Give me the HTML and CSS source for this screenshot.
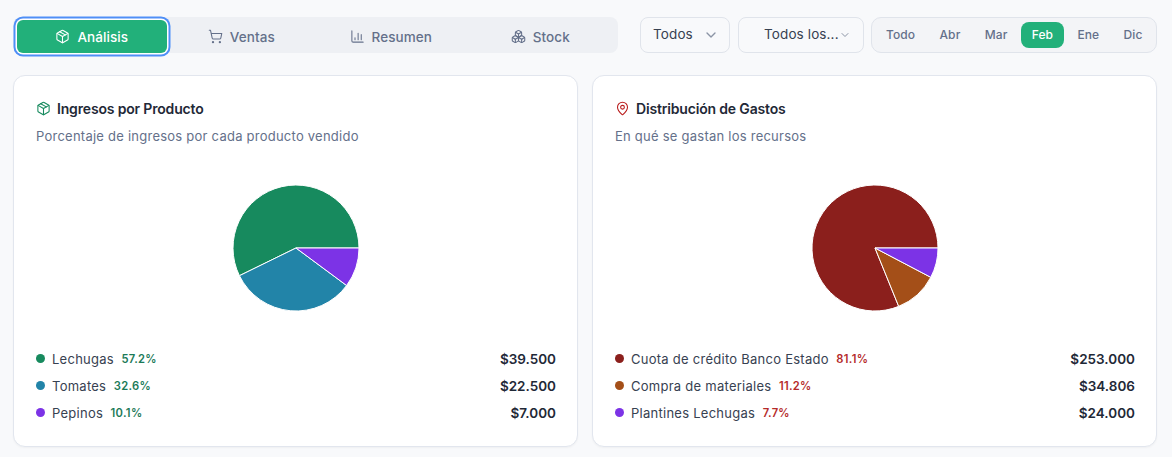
FILE: index.html
```html
<!DOCTYPE html>
<html lang="es">
<head>
<meta charset="utf-8">
<title>Análisis</title>
<link rel="stylesheet" href="styles.css">
</head>
<body>
<header class="toolbar">
  <nav class="tabs">
    <button class="tab tab-active">
      <svg class="icon" viewBox="0 0 24 24"><path d="M11 21.73a2 2 0 0 0 2 0l7-4A2 2 0 0 0 21 16V8a2 2 0 0 0-1-1.73l-7-4a2 2 0 0 0-2 0l-7 4A2 2 0 0 0 3 8v8a2 2 0 0 0 1 1.73z"/><path d="M12 22V12"/><polyline points="3.29 7 12 12 20.71 7"/><path d="m7.5 4.27 9 5.15"/></svg>
      Análisis
    </button>
    <button class="tab">
      <svg class="icon" viewBox="0 0 24 24"><circle cx="8" cy="21" r="1"/><circle cx="19" cy="21" r="1"/><path d="M2.05 2.05h2l2.66 12.42a2 2 0 0 0 2 1.58h9.78a2 2 0 0 0 1.95-1.57l1.65-7.43H5.12"/></svg>
      Ventas
    </button>
    <button class="tab">
      <svg class="icon" viewBox="0 0 24 24"><path d="M3 3v16a2 2 0 0 0 2 2h16"/><path d="M8 17v-3"/><path d="M13 17V7"/><path d="M18 17V9"/></svg>
      Resumen
    </button>
    <button class="tab">
      <svg class="icon" viewBox="0 0 24 24"><path d="M2.97 12.92A2 2 0 0 0 2 14.63v3.24a2 2 0 0 0 .97 1.71l3 1.8a2 2 0 0 0 2.06 0L12 19v-5.5l-5-3-4.03 2.42Z"/><path d="m7 16.5-4.74-2.85"/><path d="m7 16.5 5-3"/><path d="M7 16.5v5.17"/><path d="M12 13.5V19l3.97 2.38a2 2 0 0 0 2.06 0l3-1.8a2 2 0 0 0 .97-1.71v-3.24a2 2 0 0 0-.97-1.71L17 10.5l-5 3Z"/><path d="m17 16.5-5-3"/><path d="m17 16.5 4.74-2.85"/><path d="M17 16.5v5.17"/><path d="M7.97 4.42A2 2 0 0 0 7 6.13v4.37l5 3 5-3V6.13a2 2 0 0 0-.97-1.71l-3-1.8a2 2 0 0 0-2.06 0l-3 1.8Z"/><path d="M12 8 7.26 5.15"/><path d="m12 8 4.74-2.85"/><path d="M12 13.5V8"/></svg>
      Stock
    </button>
  </nav>
  <div class="select select-short">
    <span>Todos</span>
    <svg class="chevron" viewBox="0 0 24 24"><path d="m6 9 6 6 6-6"/></svg>
  </div>
  <div class="select select-long">
    <span>Todos los...</span>
    <svg class="chevron chevron-small" viewBox="0 0 24 24"><path d="m6 9 6 6 6-6"/></svg>
  </div>
  <div class="months">
    <span class="month">Todo</span>
    <span class="month">Abr</span>
    <span class="month">Mar</span>
    <span class="month month-active">Feb</span>
    <span class="month">Ene</span>
    <span class="month">Dic</span>
  </div>
</header>

<main class="cards">
  <section class="card">
    <h2 class="card-title">
      <svg class="title-icon icon-green" viewBox="0 0 24 24"><path d="M11 21.73a2 2 0 0 0 2 0l7-4A2 2 0 0 0 21 16V8a2 2 0 0 0-1-1.73l-7-4a2 2 0 0 0-2 0l-7 4A2 2 0 0 0 3 8v8a2 2 0 0 0 1 1.73z"/><path d="M12 22V12"/><polyline points="3.29 7 12 12 20.71 7"/><path d="m7.5 4.27 9 5.15"/></svg>
      Ingresos por Producto
    </h2>
    <p class="card-sub">Porcentaje de ingresos por cada producto vendido</p>
    <div class="chart">
      <svg class="pie" viewBox="0 0 130 130">
        <path class="c-green" d="M65 65L128 65A63 63 0 1 0 8.42 92.71Z"/>
        <path class="c-blue" d="M65 65L8.42 92.71A63 63 0 0 0 115.62 102.5Z"/>
        <path class="c-purple" d="M65 65L115.62 102.5A63 63 0 0 0 128 65Z"/>
      </svg>
    </div>
    <ul class="legend">
      <li class="row"><i class="dot bg-green"></i><span class="name">Lechugas</span><span class="pct pct-green">57.2%</span><span class="amount">$39.500</span></li>
      <li class="row"><i class="dot bg-blue"></i><span class="name">Tomates</span><span class="pct pct-green">32.6%</span><span class="amount">$22.500</span></li>
      <li class="row"><i class="dot bg-purple"></i><span class="name">Pepinos</span><span class="pct pct-green">10.1%</span><span class="amount">$7.000</span></li>
    </ul>
  </section>

  <section class="card">
    <h2 class="card-title">
      <svg class="title-icon icon-red" viewBox="0 0 24 24"><path d="M20 10c0 4.993-5.539 10.193-7.399 11.799a1 1 0 0 1-1.202 0C9.539 20.193 4 14.993 4 10a8 8 0 0 1 16 0"/><circle cx="12" cy="10" r="3"/></svg>
      Distribución de Gastos
    </h2>
    <p class="card-sub">En qué se gastan los recursos</p>
    <div class="chart">
      <svg class="pie" viewBox="0 0 130 130">
        <path class="c-red" d="M65 65L128 65A63 63 0 1 0 88.7 123.37Z"/>
        <path class="c-orange" d="M65 65L88.7 123.37A63 63 0 0 0 120.77 94.3Z"/>
        <path class="c-purple" d="M65 65L120.77 94.3A63 63 0 0 0 128 65Z"/>
      </svg>
    </div>
    <ul class="legend">
      <li class="row"><i class="dot bg-red"></i><span class="name">Cuota de crédito Banco Estado</span><span class="pct pct-red">81.1%</span><span class="amount">$253.000</span></li>
      <li class="row"><i class="dot bg-orange"></i><span class="name">Compra de materiales</span><span class="pct pct-red">11.2%</span><span class="amount">$34.806</span></li>
      <li class="row"><i class="dot bg-purple"></i><span class="name">Plantines Lechugas</span><span class="pct pct-red">7.7%</span><span class="amount">$24.000</span></li>
    </ul>
  </section>
</main>
</body>
</html>
```
FILE: styles.css
```css
* { box-sizing: border-box; }
html, body { margin: 0; height: 100%; overflow: hidden; }
body {
  background: #f8f9fb;
  font-family: Inter, "Liberation Sans", sans-serif;
  color: #1f2937;
  padding: 17px 15px 0 13px;
}
.toolbar { display: flex; height: 36px; }
.tabs {
  width: 605px;
  height: 36px;
  padding: 3px 3px 0 4px;
  background: #eef0f4;
  border-radius: 8px;
  display: grid;
  grid-template-columns: repeat(4, 1fr);
}
.tab {
  height: 33px;
  border: 0;
  background: transparent;
  border-radius: 6px;
  font: 500 13.5px Inter, sans-serif;
  letter-spacing: 0.08px;
  color: #64708a;
  display: flex;
  align-items: center;
  justify-content: center;
  gap: 7px;
  padding: 0;
}
.tab-active {
  background: #22b07a;
  color: #fff;
  box-shadow: 0 0 0 1.5px #fff, 0 0 0 3.5px #4f8ff7;
}
.icon, .title-icon {
  width: 15px;
  height: 15px;
  fill: none;
  stroke: currentColor;
  stroke-width: 1.7;
  stroke-linecap: round;
  stroke-linejoin: round;
  flex: none;
}
.select {
  height: 36px;
  border: 1px solid #e0e4eb;
  border-radius: 8px;
  background: #f8f9fb;
  display: flex;
  align-items: center;
  font-size: 13.5px;
  line-height: 32px;
  letter-spacing: 0.12px;
  color: #374151;
  white-space: nowrap;
}
.select span { margin-top: -2px; }
.select-short { width: 90px; margin-left: 22px; padding: 0 10px 0 12px; justify-content: space-between; }
.select-long { width: 126px; margin-left: 8px; padding: 0 12px 0 25px; justify-content: space-between; }
.chevron {
  width: 16px;
  height: 16px;
  fill: none;
  stroke: #8b94a5;
  stroke-width: 2;
  stroke-linecap: round;
  stroke-linejoin: round;
}
.chevron-small { width: 12px; height: 12px; }
.months {
  width: 286px;
  height: 36px;
  margin-left: 7px;
  border: 1px solid #e0e4eb;
  border-radius: 10px;
  background: #f3f4f7;
  display: flex;
  align-items: center;
  gap: 2.3px;
  padding: 0 3px;
}
.month {
  font-size: 12px;
  font-weight: 500;
  letter-spacing: 0.1px;
  color: #64708a;
  padding: 0 11px;
  height: 26px;
  line-height: 26px;
  text-align: center;
  border-radius: 8px;
}
.month-active { background: #22b07a; color: #fff; }
.cards {
  display: grid;
  grid-template-columns: 565px 565px;
  gap: 14px;
  margin-top: 22px;
}
.card {
  height: 372px;
  background: #fff;
  border: 1px solid #e2e6ee;
  border-radius: 12px;
  padding: 22px 21px 0 22px;
  box-shadow: 0 1px 2px rgba(0, 0, 0, 0.04);
}
.card-title {
  margin: 0;
  height: 20px;
  display: flex;
  align-items: center;
  gap: 6px;
  font-size: 14px;
  font-weight: 600;
  letter-spacing: -0.17px;
  color: #1f2937;
}
.icon-green { color: #178a5e; }
.icon-red { color: #b91c1c; }
.card-sub {
  margin: 9px 0 0;
  font-size: 13px;
  line-height: 18px;
  letter-spacing: 0.24px;
  color: #64708a;
}
.chart { display: flex; justify-content: center; margin-top: 38px; }
.pie { width: 130px; height: 130px; display: block; }
.pie path { stroke: #fff; stroke-width: 1; }
.c-green { fill: #178a5e; }
.c-blue { fill: #2284a8; }
.c-purple { fill: #7c33e6; }
.c-red { fill: #8b1f1c; }
.c-orange { fill: #a44f18; }
.legend { list-style: none; margin: 32px 0 0; padding: 0; }
.row { display: flex; align-items: center; height: 27px; font-size: 13px; }
.dot { width: 9px; height: 9px; border-radius: 50%; margin-right: 7px; flex: none; }
.bg-green { background: #178a5e; }
.bg-blue { background: #2284a8; }
.bg-purple { background: #7c33e6; }
.bg-red { background: #8b1f1c; }
.bg-orange { background: #a44f18; }
.name { color: #374151; letter-spacing: 0.26px; }
.pct { font-size: 11.2px; font-weight: 600; margin-left: 7.5px; letter-spacing: 0.3px; }
.pct-green { color: #1c7a58; }
.pct-red { color: #b52a2a; }
.amount { margin-left: auto; font-size: 13.5px; font-weight: 600; color: #1f2937; }
```
